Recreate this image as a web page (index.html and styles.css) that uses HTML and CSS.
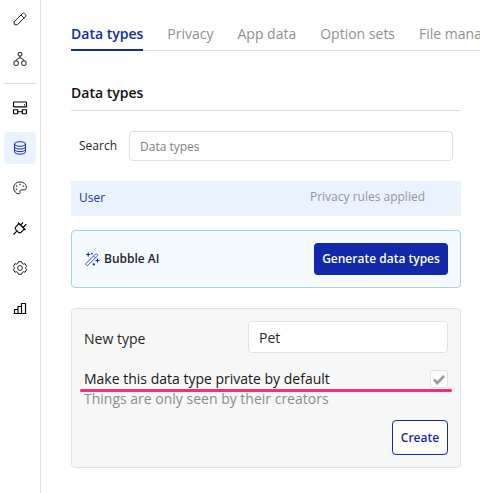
FILE: index.html
```html
<!DOCTYPE html>
<html lang="en">
<head>
<meta charset="utf-8">
<title>Data types</title>
<link rel="stylesheet" href="styles.css">
</head>
<body>
<div class="app">
  <nav class="sidebar">
    <a class="nav-item"><svg viewBox="0 0 16 16"><path d="M2.2 10.8 10.2 2.8Q11.3 1.5 12.5 2.5L13.5 3.5Q14.5 4.6 13.3 5.8L5.3 13.8H3Q2.2 13.8 2.2 13ZM9 4 12 7"/></svg></a>
    <a class="nav-item"><svg viewBox="0 0 16 16"><rect x="6.2" y="1.5" width="3.6" height="3.4" rx=".5"/><path d="M8 5V7M4 10V9.2L7 7H9L12 9.2V10"/><rect x="2" y="10" width="4.3" height="4.3" rx="1"/><rect x="9.7" y="10" width="4.3" height="4.3" rx="1"/></svg></a>
    <hr class="divider">
    <a class="nav-item dark"><svg viewBox="0 0 16 16"><rect x="1.5" y="2" width="13" height="4.8" rx=".6"/><rect x="1.5" y="9.7" width="4.2" height="4" rx=".4"/><rect x="10.3" y="9.7" width="4.2" height="4" rx=".4"/><path d="M5.7 11.7H10.3M12 4.8H13"/></svg></a>
    <a class="nav-item active"><svg viewBox="0 0 16 16"><ellipse cx="8" cy="4" rx="5.5" ry="2.3"/><path d="M2.5 4V11.7C2.5 15 13.5 15 13.5 11.7V4M2.5 6.7C2.5 9.8 13.5 9.8 13.5 6.7M2.5 9.3C2.5 12.4 13.5 12.4 13.5 9.3"/></svg></a>
    <a class="nav-item"><svg viewBox="0 0 16 16"><path d="M8 2C4 2 1.7 4.8 1.7 8S4.3 13.8 6.7 13.8C8 13.8 8.3 13 8 12C7.6 10.7 8.3 9.9 9.6 9.9H12.3C13.6 9.9 14.4 9 14.4 7.8C14.4 4.3 11.6 2 8 2Z"/><path class="dots" d="M8 4.5h.1M4.6 6h.1M4.3 9.2h.1M11.2 6h.1"/></svg></a>
    <a class="nav-item dark"><svg viewBox="0 0 16 16"><path d="M1.5 14.5 4.6 11.4M6 2.5 13.5 10M7 3.5 3.8 6.9Q2.6 8.3 3.8 9.7L6.3 12.2Q7.7 13.4 9.1 12.2L12.5 9M8.5 5 11.2 2.3M11 7.5 14.3 4.2"/></svg></a>
    <a class="nav-item"><svg viewBox="0 0 16 16"><path d="M6.4 1.7H9.6L10.2 3.5 11.2 4.1 13.1 3.7 14.6 6.5 13.3 7.9 14.6 9.4 13.1 12.2 11.2 11.8 10.2 12.4 9.6 14.3H6.4L5.8 12.4 4.8 11.8 2.9 12.2 1.4 9.4 2.7 7.9 1.4 6.5 2.9 3.7 4.8 4.1 5.8 3.5Z"/><circle cx="8" cy="8" r="2.4"/></svg></a>
    <a class="nav-item dark"><svg viewBox="0 0 16 16"><path d="M1.5 13.5H14.5M2.5 13.5V9.5H6V13.5M6 13.5V6.5H9.5V13.5M9.5 13.5V3.5H13.5V13.5"/></svg></a>
  </nav>
  <main class="content">
    <nav class="tabs">
      <a class="tab selected">Data types</a><a class="tab">Privacy</a><a class="tab">App data</a><a class="tab">Option sets</a><a class="tab">File manager</a>
    </nav>
    <div class="panel">
      <h1 class="title">Data types</h1>
      <div class="search"><label for="search">Search</label><input id="search" placeholder="Data types"></div>
      <div class="type-row"><span>User</span><span class="rules">Privacy rules applied</span></div>
      <section class="ai">
        <svg viewBox="0 0 16 16"><path d="M2 12.5 11.4 3.1Q12 2.5 12.6 3.1L13.3 3.8Q13.8 4.4 13.3 5L3.9 14.3Q3.3 14.8 2.7 14.3L2 13.6Q1.5 13 2 12.5ZM9.5 5 11.4 6.9"/><path class="spark" d="M4.2 1.5V5.5M2.2 3.5H6.2M13.5 7.5V11.5M11.5 9.5H15.5M9.8 12.2V14.4M8.7 13.3H10.9M8 1.8V3.4M7.2 2.6H8.8"/></svg>
        <strong>Bubble AI</strong>
        <button class="generate">Generate data types</button>
      </section>
      <section class="new-type">
        <div class="field"><label for="name">New type</label><input id="name" value="Pet"></div>
        <div class="private"><span>Make this data type private by default</span><span class="check"><svg viewBox="0 0 16 16"><path d="M3 8.6 6.3 11.9 13 5"/></svg></span></div>
        <p class="hint">Things are only seen by their creators</p>
        <button class="create">Create</button>
        <div class="underline"></div>
      </section>
    </div>
  </main>
</div>
</body>
</html>
```
FILE: styles.css
```css
* { box-sizing: border-box; }
body { margin: 0; background: #fff; color: #262626; font: 14px/20px "Open Sans", sans-serif; overflow: hidden; }
input, button { font: inherit; color: inherit; }
.app { display: flex; height: 493px; }
.sidebar { width: 41px; flex: none; border-right: 1px solid #e0e0e0; padding: 3px 4px; display: flex; flex-direction: column; gap: 8px; }
.nav-item { height: 32px; width: 32px; flex: none; display: flex; align-items: center; justify-content: center; border-radius: 4px; color: #222; }
.dark { color: #000; }
.nav-item svg { width: 16px; height: 16px; }
svg { fill: none; stroke: currentColor; stroke-width: 1; stroke-linejoin: round; }
.dark svg { stroke-width: 1.15; }
.dots { stroke-width: 1.4; stroke-linecap: round; }
.active { background: #eaf2ff; color: #1b33b8; }
.divider { width: 32px; height: 1px; border: 0; margin: 0; background: #e0e0e0; flex: none; }
.content { flex: 1; min-width: 0; padding-left: 30px; overflow: hidden; }
.tabs { display: flex; gap: 24px; height: 51px; border-bottom: 1px solid #e0e0e0; white-space: nowrap; }
.tab { height: 51px; padding-top: 24px; color: #8f8f8f; }
.selected { color: #1229aa; font-weight: 600; border-bottom: 2px solid #1229aa; }
.panel { width: 390px; }
.title { margin: 0; height: 60px; padding-top: 32px; border-bottom: 1px solid #dedede; font: 600 14px/20px "Open Sans", sans-serif; color: #111; }
.search { display: flex; align-items: center; height: 30px; margin-top: 20px; padding: 0 8px; font-size: 12px; }
.search label { width: 50px; }
.search input { flex: 1; min-width: 0; height: 30px; border: 1px solid #e0e0e0; border-radius: 4px; padding: 0 10px; background: #fff; }
.search input::placeholder { color: #808080; opacity: 1; }
.type-row { display: flex; justify-content: space-between; height: 35px; margin-top: 20px; padding: 7px 36px 0 8px; background: #eaf2ff; color: #1b33b8; font-size: 12px; }
.rules { color: #929599; margin-top: -1px; }
.ai { display: flex; align-items: center; height: 58px; margin-top: 14px; padding: 0 12px; border: 1px solid #aaccf8; border-radius: 4px; background: #f5faff; font-size: 12px; }
.ai svg { width: 16px; height: 16px; margin-right: 4px; color: #4256c8; }
.ai .spark { stroke: #1229aa; stroke-width: 1.2; }
.ai strong { font-weight: 600; }
.generate { margin-left: auto; width: 134px; height: 32px; padding: 0; border: 0; border-radius: 4px; background: #1229aa; color: #fff; font-weight: 600; }
.new-type { position: relative; height: 160px; margin-top: 20px; padding: 12px; border: 1px solid #e2e2e2; border-radius: 4px; background: #f7f7f7; display: flex; flex-direction: column; }
.field { display: flex; justify-content: space-between; align-items: center; height: 32px; }
.field label { padding-top: 4px; }
.field input { width: 200px; height: 32px; border: 1px solid #e2e2e2; border-radius: 4px; padding: 0 10px; background: #fff; }
.private { display: flex; justify-content: space-between; height: 20px; margin-top: 16px; color: #181818; }
.check { width: 18px; height: 18px; margin-top: 1px; border: 1px solid #e2e2e2; border-radius: 3px; background: #fff; }
.check svg { display: block; width: 16px; height: 16px; stroke: #9aa0a2; stroke-width: 2.8; stroke-linejoin: miter; }
.hint { margin: 0; color: #8c8c8c; }
.create { align-self: flex-end; width: 56px; height: 35px; margin-top: 11px; padding: 0; border: 1px solid #1229aa; border-radius: 4px; background: #fff; color: #1229aa; font-size: 12px; font-weight: 600; }
.underline { position: absolute; left: 8px; top: 80px; width: 372px; height: 3px; border-radius: 2px; background: #fa2e6b; }
```
